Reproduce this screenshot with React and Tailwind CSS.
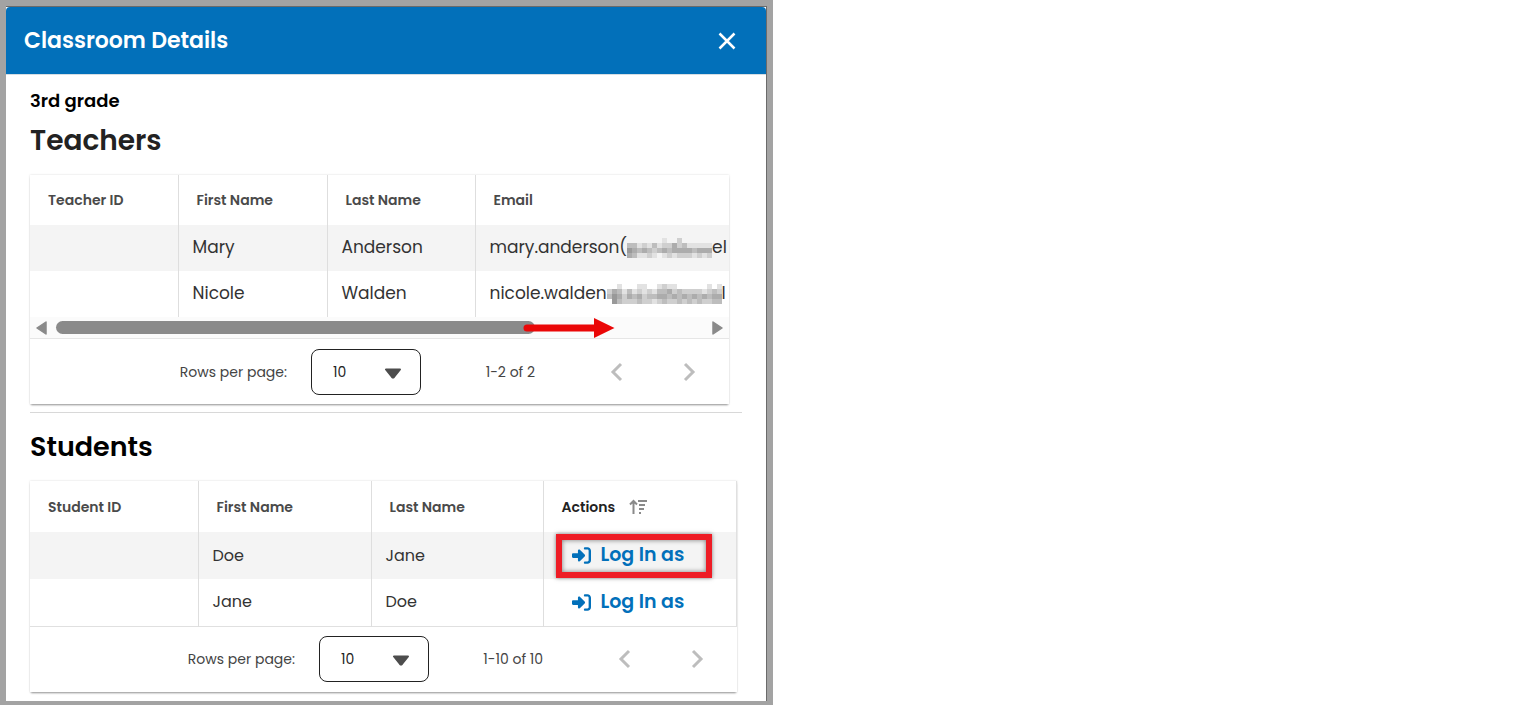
import React from 'react';
import { FaRightToBracket } from 'react-icons/fa6';

// darkness of each 5px tile, top row to bottom row
const shortMosaic = [
  '00000001002000000',
  '33121312242311111',
  '54343234344443444',
  '43112101212221212',
];

const longMosaic = [
  '00100011001211000000101',
  '24313121213342322221232',
  '35424342334434343434344',
  '05322232212322323232233',
];

const teachers = [
  { id: '', first: 'Mary', last: 'Anderson', user: 'mary.anderson(', mosaic: shortMosaic, tail: 'el' },
  { id: '', first: 'Nicole', last: 'Walden', user: 'nicole.walden', mosaic: longMosaic, tail: 'l' },
];

const students = [
  { id: '', first: 'Doe', last: 'Jane', highlighted: true },
  { id: '', first: 'Jane', last: 'Doe', highlighted: false },
];

const tileColors = ['none', '#e2e2e2', '#cfcfcf', '#bdbdbd', '#acacac', '#999999'];

const Redacted = ({ rows }) => (
  <svg
    width={rows[0].length * 5}
    height="20"
    aria-hidden="true"
    shapeRendering="crispEdges"
    className="shrink-0"
  >
    {rows.map((row, y) =>
      row.split('').map((shade, x) => (
        <rect key={`${x}-${y}`} x={x * 5} y={y * 5} width="5" height="5" fill={tileColors[shade]} />
      ))
    )}
  </svg>
);

const Chevron = ({ d }) => (
  <svg width="24" height="24" viewBox="0 0 24 24" fill="none" stroke="#bdbdbd" strokeWidth="3" aria-hidden="true">
    <path d={d} />
  </svg>
);

const Pagination = ({ id, range }) => (
  <div className="flex h-[65px] items-center justify-end pr-1 text-sm text-[#444]">
    <label htmlFor={id} className="mr-6">Rows per page:</label>
    <div className="relative">
      <select
        id={id}
        defaultValue="10"
        className="block h-[46px] w-[110px] appearance-none rounded-lg border border-[#222] bg-white pl-[21px] text-[#222]"
      >
        <option>10</option>
        <option>25</option>
      </select>
      <svg width="18" height="11" viewBox="0 0 18 11" aria-hidden="true" className="pointer-events-none absolute top-[19px] right-[19px]">
        <path d="M2 1.5H16L10 9Q9 10 8 9Z" fill="#4d4d4d" stroke="#4d4d4d" strokeWidth="2" strokeLinejoin="round" />
      </svg>
    </div>
    <span className="w-[160px] pr-[46px] text-right">{range}</span>
    <button type="button" aria-label="Previous page" className="flex w-[72px] justify-center">
      <Chevron d="M16 4 8 12 16 20" />
    </button>
    <button type="button" aria-label="Next page" className="flex w-[72px] justify-center">
      <Chevron d="M8 4 16 12 8 20" />
    </button>
  </div>
);

const HeadCell = ({ children, className = '' }) => (
  <th scope="col" className={`border-[#dedede] pl-[18px] text-left text-sm font-semibold not-first:border-l ${className}`}>
    {children}
  </th>
);

const Cell = ({ children }) => (
  <td className="overflow-hidden border-[#dedede] pl-[14px] whitespace-nowrap not-first:border-l">{children}</td>
);

const ScrollBar = () => (
  <div className="flex h-[22px] items-center gap-[9px] border-b border-[#e6e6e6] bg-[#fbfbfb] px-[6px]">
    <svg width="11" height="14" viewBox="0 0 11 14" aria-hidden="true">
      <path d="M10 1V13L1 7Z" fill="#8a8a8a" stroke="#8a8a8a" strokeWidth="1.5" strokeLinejoin="round" />
    </svg>
    <div className="flex-1">
      <div className="relative h-[13px] w-[74%] rounded-full bg-[#8a8a8a]">
        <svg width="92" height="22" viewBox="0 0 92 22" aria-hidden="true" className="absolute -top-1 -right-20">
          <path d="M4 11H72" stroke="#ea0707" strokeWidth="7" strokeLinecap="round" />
          <path d="M71 1V21L91.500 11Z" fill="#ea0707" />
        </svg>
      </div>
    </div>
    <svg width="11" height="14" viewBox="0 0 11 14" aria-hidden="true">
      <path d="M1 1V13L10 7Z" fill="#8a8a8a" stroke="#8a8a8a" strokeWidth="1.5" strokeLinejoin="round" />
    </svg>
  </div>
);

const TeachersTable = () => (
  <div className="mr-[13px] bg-white shadow-[0_2px_2px_-1px_rgba(0,0,0,0.4),0_0_2px_rgba(0,0,0,0.15)]">
    <table className="w-full table-fixed text-[17px] text-[#333]">
      <colgroup>
        <col className="w-[148px]" />
        <col className="w-[149px]" />
        <col className="w-[148px]" />
        <col />
      </colgroup>
      <thead>
        <tr className="h-[50px] text-[#4a4a4a]">
          <HeadCell>Teacher ID</HeadCell>
          <HeadCell>First Name</HeadCell>
          <HeadCell>Last Name</HeadCell>
          <HeadCell>Email</HeadCell>
        </tr>
      </thead>
      <tbody>
        {teachers.map((t) => (
          <tr key={t.first} className="h-[46px] odd:bg-[#f4f4f4]">
            <Cell>{t.id}</Cell>
            <Cell>{t.first}</Cell>
            <Cell>{t.last}</Cell>
            <Cell>
              <span className="flex items-center">
                {t.user}
                <Redacted rows={t.mosaic} />
                {t.tail}
              </span>
            </Cell>
          </tr>
        ))}
      </tbody>
    </table>
    <ScrollBar />
    <Pagination id="teacher-rows" range="1-2 of 2" />
  </div>
);

const SortIcon = () => (
  <svg width="19" height="16" viewBox="0 0 19 16" fill="none" stroke="#8a8a8a" strokeWidth="2" aria-hidden="true">
    <path d="M4.500 15V2M1 5.500 4.500 2 8 5.500M9 2H18M10 6H16M10 10H15M10 14H12" />
  </svg>
);

const StudentsTable = () => (
  <div className="mr-[5px] bg-white shadow-[0_2px_2px_-1px_rgba(0,0,0,0.4),0_0_2px_rgba(0,0,0,0.15)]">
    <table className="w-full table-fixed border-r border-b border-[#e0e0e0] text-base text-[#333]">
      <colgroup>
        <col className="w-[168px]" />
        <col className="w-[173px]" />
        <col className="w-[172px]" />
        <col />
      </colgroup>
      <thead>
        <tr className="h-[51px] text-[#4a4a4a]">
          <HeadCell>Student ID</HeadCell>
          <HeadCell>First Name</HeadCell>
          <HeadCell>Last Name</HeadCell>
          <HeadCell className="text-[#222]">
            <button type="button" className="flex items-center gap-[14px]">
              Actions <SortIcon />
            </button>
          </HeadCell>
        </tr>
      </thead>
      <tbody>
        {students.map((s) => (
          <tr key={s.first} className="h-[47px] odd:bg-[#f4f4f4]">
            <Cell>{s.id}</Cell>
            <Cell>{s.first}</Cell>
            <Cell>{s.last}</Cell>
            <td className="border-l border-[#dedede] pl-3">
              <button
                type="button"
                className={`flex h-11 w-[156px] items-center gap-[10px] border-6 pl-[10px] text-[19px] font-semibold text-[#0270ba] ${
                  s.highlighted ? 'border-[#ee1c25] shadow-[0_0_4px_rgba(0,0,0,0.5),inset_0_0_5px_rgba(0,0,0,0.5)]' : 'border-transparent'
                }`}
              >
                <FaRightToBracket className="size-[19px]" />
                Log In as
              </button>
            </td>
          </tr>
        ))}
      </tbody>
    </table>
    <Pagination id="student-rows" range="1-10 of 10" />
  </div>
);

const App = () => {
  return (
    <div className="min-h-screen bg-white font-['Poppins','Inter',sans-serif]">
      <div className="w-full max-w-[773px] bg-[#a3a3a3] px-[6px] pt-[6px] pb-1">
        <div className="border-t border-r border-[#6b6b6b] bg-white">
          <header className="flex h-[68px] items-center justify-between rounded-t border-b border-[#d5dde3] bg-[#0270ba] pr-7 pl-[18px] text-white">
            <h1 className="text-[22px] font-semibold">Classroom Details</h1>
            <button type="button" aria-label="Close">
              <svg width="22" height="22" viewBox="0 0 22 22" stroke="currentColor" strokeWidth="2.500" aria-hidden="true">
                <path d="M3.500 3.500 18.500 18.500M18.500 3.500 3.500 18.500" />
              </svg>
            </button>
          </header>
          <main className="px-6 pt-[14px] pb-[9px]">
            <p className="text-lg leading-6 font-semibold text-black">3rd grade</p>
            <h2 className="mt-2 mb-[14px] text-[28px] leading-10 font-semibold text-[#222]">Teachers</h2>
            <TeachersTable />
            <hr className="mt-2 border-[#d8d8d8]" />
            <h2 className="my-4 text-[27px] leading-9 font-semibold text-black">Students</h2>
            <StudentsTable />
          </main>
        </div>
      </div>
    </div>
  );
};

export default App;
